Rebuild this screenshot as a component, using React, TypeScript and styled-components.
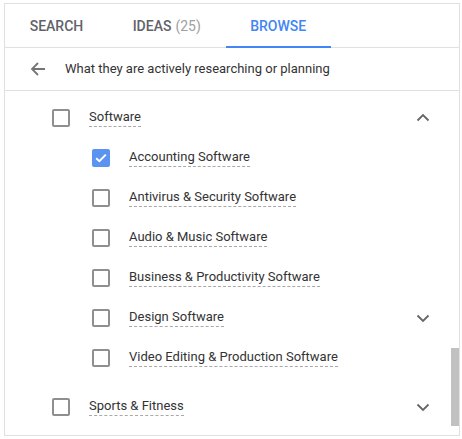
import styled, { createGlobalStyle } from 'styled-components'

const GlobalStyle = createGlobalStyle`
  html, body {
    margin: 0;
    padding: 0;
    background: #ffffff;
    font-family: Roboto, 'Liberation Sans', Arial, sans-serif;
  }
`

const Panel = styled.div`
  margin: 3px 0 0 4px;
  width: 454px;
  height: 431px;
  border: 1px solid #e0e0e0;
  display: flex;
  flex-direction: column;
  overflow: hidden;
`

const Tabs = styled.nav`
  display: flex;
  height: 43px;
  border-bottom: 1px solid #e0e0e0;
  flex-shrink: 0;
`

const Tab = styled.div<{ $active?: boolean }>`
  display: flex;
  align-items: center;
  justify-content: center;
  padding: 1px 24.7px 0;
  font-size: 14px;
  font-weight: 500;
  color: ${(p) => (p.$active ? '#4285f4' : '#5f6368')};
  border-bottom: 2px solid ${(p) => (p.$active ? '#4285f4' : 'transparent')};
  margin-bottom: -1px;

  span {
    color: #a0a0a0;
    font-weight: 400;
    margin-left: 4px;
  }
`

const SubHeader = styled.div`
  display: flex;
  align-items: center;
  height: 43px;
  padding-left: 24px;
  padding-bottom: 1px;
  box-sizing: border-box;
  gap: 18px;
  border-bottom: 1px solid #e0e0e0;
  font-size: 13px;
  color: #333333;
  flex-shrink: 0;
`

const ListArea = styled.div`
  position: relative;
  flex: 1;
  padding-top: 7px;
`

const Row = styled.div<{ $level: number; $gapAfter?: number }>`
  display: flex;
  align-items: center;
  height: 40px;
  padding-left: ${(p) => 47 + p.$level * 40}px;
  padding-right: 29px;
  margin-bottom: ${(p) => p.$gapAfter ?? 0}px;
`

const Box = styled.div<{ $checked?: boolean }>`
  width: 18px;
  height: 18px;
  box-sizing: border-box;
  border-radius: 2px;
  border: 2px solid ${(p) => (p.$checked ? '#5b93f0' : '#8f8f8f')};
  background: ${(p) => (p.$checked ? '#5b93f0' : '#ffffff')};
  display: flex;
  align-items: center;
  justify-content: center;
  flex-shrink: 0;
`

const Label = styled.span`
  margin-left: 19px;
  font-size: 13px;
  color: #333333;
  line-height: 16px;
  border-bottom: 1px dashed #a8a8a8;
  padding-bottom: 1px;
`

const Chevron = styled.svg`
  margin-left: auto;
  flex-shrink: 0;
`

const Thumb = styled.div`
  position: absolute;
  right: 0;
  top: 257px;
  width: 8px;
  height: 78px;
  background: #c1c1c1;
`

function Check() {
  return (
    <svg width="14" height="14" viewBox="0 0 14 14">
      <path d="M2.2 7.2 L5.4 10.2 L11.8 3.6" fill="none" stroke="#ffffff" strokeWidth="2" />
    </svg>
  )
}

function Arrow({ up }: { up?: boolean }) {
  return (
    <Chevron width="14" height="14" viewBox="0 0 14 14">
      <path
        d={up ? 'M1.5 9.5 L7 4 L12.5 9.5' : 'M1.5 4.5 L7 10 L12.5 4.5'}
        fill="none"
        stroke="#666666"
        strokeWidth="1.8"
      />
    </Chevron>
  )
}

interface Item {
  label: string
  level: number
  checked?: boolean
  chevron?: 'up' | 'down'
  gapAfter?: number
}

const items: Item[] = [
  { label: 'Software', level: 0, chevron: 'up' },
  { label: 'Accounting Software', level: 1, checked: true },
  { label: 'Antivirus & Security Software', level: 1 },
  { label: 'Audio & Music Software', level: 1 },
  { label: 'Business & Productivity Software', level: 1 },
  { label: 'Design Software', level: 1, chevron: 'down' },
  { label: 'Video Editing & Production Software', level: 1, gapAfter: 9 },
  { label: 'Sports & Fitness', level: 0, chevron: 'down' },
]

export default function App() {
  return (
    <>
      <GlobalStyle />
      <Panel>
        <Tabs>
          <Tab>SEARCH</Tab>
          <Tab>
            IDEAS<span>(25)</span>
          </Tab>
          <Tab $active>BROWSE</Tab>
        </Tabs>
        <SubHeader>
          <svg width="18" height="18" viewBox="0 0 18 18">
            <path d="M16 9 H3 M9 3 L3 9 L9 15" fill="none" stroke="#757575" strokeWidth="1.8" />
          </svg>
          What they are actively researching or planning
        </SubHeader>
        <ListArea>
          {items.map((item) => (
            <Row key={item.label} $level={item.level} $gapAfter={item.gapAfter}>
              <Box $checked={item.checked}>{item.checked && <Check />}</Box>
              <Label>{item.label}</Label>
              {item.chevron && <Arrow up={item.chevron === 'up'} />}
            </Row>
          ))}
          <Thumb />
        </ListArea>
      </Panel>
    </>
  )
}
